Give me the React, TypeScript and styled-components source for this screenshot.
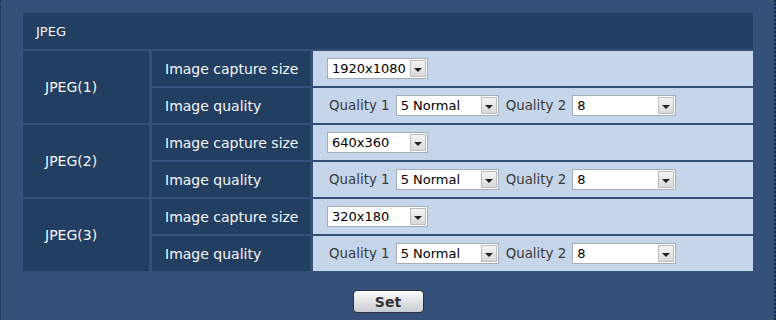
import styled, { createGlobalStyle } from 'styled-components';

const GlobalStyle = createGlobalStyle`
  html, body {
    margin: 0;
    padding: 0;
    overflow: hidden;
    background: #35517a;
  }
  body {
    font-family: 'DejaVu Sans', Verdana, sans-serif;
  }
`;

const rows = [
  { name: 'JPEG(1)', size: '1920x1080' },
  { name: 'JPEG(2)', size: '640x360' },
  { name: 'JPEG(3)', size: '320x180' },
];

type SelectProps = { value: string; width: number };

const Select = ({ value, width }: SelectProps) => (
  <SelectBox $width={width}>
    <SelectText>{value}</SelectText>
    <ArrowBox>
      <Triangle />
    </ArrowBox>
  </SelectBox>
);

const App = () => (
  <>
    <GlobalStyle />
    <Page>
      <Grid>
        <HeaderCell>JPEG</HeaderCell>
        {rows.map((row) => (
          <Group key={row.name}>
            <NameCell>{row.name}</NameCell>
            <LabelCell>Image capture size</LabelCell>
            <ValueCell>
              <Select value={row.size} width={101} />
            </ValueCell>
            <LabelCell>Image quality</LabelCell>
            <ValueCell>
              <QualityLabel>Quality 1</QualityLabel>
              <Select value="5 Normal" width={103} />
              <QualityLabel $spaced>Quality 2</QualityLabel>
              <Select value="8" width={104} />
            </ValueCell>
          </Group>
        ))}
      </Grid>
      <ButtonRow>
        <SetButton type="button">Set</SetButton>
      </ButtonRow>
    </Page>
  </>
);

const Page = styled.div`
  box-sizing: border-box;
  width: 776px;
  height: 320px;
  padding: 13px 21px 0 22px;
  border-left: 1px dotted #1a2b45;
  border-right: 2px dotted #1a2b45;
`;

const Grid = styled.div`
  display: grid;
  grid-template-columns: 126px 158px 1fr;
  grid-auto-rows: 35px;
  grid-template-rows: 36px;
  gap: 2px 3px;
`;

const Group = styled.div`
  display: contents;
`;

const Cell = styled.div`
  display: flex;
  align-items: center;
  background: #223f62;
  color: #f5f6f8;
  font-size: 14px;
`;

const HeaderCell = styled(Cell)`
  grid-column: 1 / 4;
  padding-left: 13px;
  font-size: 13px;
`;

const NameCell = styled(Cell)`
  grid-row: span 2;
  padding-left: 22px;
`;

const LabelCell = styled(Cell)`
  padding-left: 13px;
`;

const ValueCell = styled(Cell)`
  background: #c6d6ea;
  color: #333;
  padding-left: 14px;
`;

const QualityLabel = styled.span<{ $spaced?: boolean }>`
  color: #3a3a3a;
  font-size: 13.4px;
  margin-left: ${(p) => (p.$spaced ? 7 : 2)}px;
  margin-right: 6px;
`;

const SelectBox = styled.div<{ $width: number }>`
  box-sizing: border-box;
  display: flex;
  align-items: center;
  width: ${(p) => p.$width}px;
  height: 21px;
  background: #fff;
  border: 1px solid #a5acb5;
  padding: 1px;
`;

const SelectText = styled.span`
  flex: 1;
  padding-left: 3px;
  color: #000;
  font-size: 13px;
  white-space: nowrap;
  overflow: hidden;
`;

const ArrowBox = styled.div`
  box-sizing: border-box;
  display: flex;
  align-items: center;
  justify-content: center;
  width: 16px;
  height: 17px;
  border: 1px solid #b9bcc1;
  background: linear-gradient(#f4f4f4, #d9d9d9);
`;

const Triangle = styled.div`
  width: 0;
  height: 0;
  margin-top: 2px;
  border-left: 4px solid transparent;
  border-right: 4px solid transparent;
  border-top: 4px solid #222;
`;

const ButtonRow = styled.div`
  display: flex;
  justify-content: center;
  padding-top: 19px;
`;

const SetButton = styled.button`
  width: 71px;
  height: 23px;
  border: 1px solid #2b3038;
  border-radius: 4px;
  background: linear-gradient(#fbfbfb 0%, #e2e4e7 50%, #c9ccd1 100%);
  color: #333;
  font-family: 'DejaVu Sans', Verdana, sans-serif;
  font-size: 14px;
  font-weight: bold;
  padding: 0;
`;

export default App;
